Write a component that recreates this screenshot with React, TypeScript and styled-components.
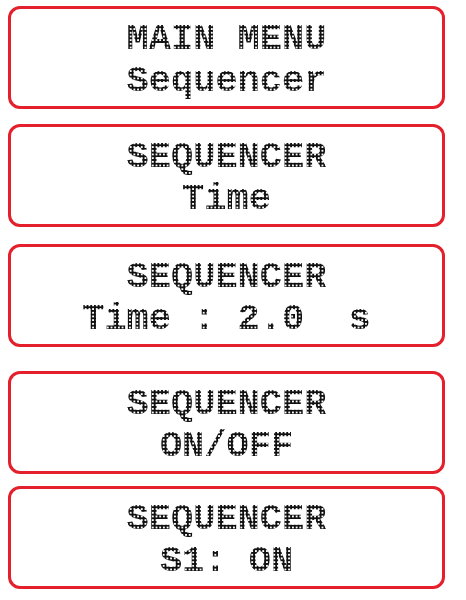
import styled, { createGlobalStyle } from 'styled-components';

const GlobalStyle = createGlobalStyle`
  body {
    margin: 0;
    background: #ffffff;
  }
`;

const Page = styled.div`
  display: flex;
  flex-direction: column;
  width: 437px;
  padding: 6px 0 0 8px;
`;

const Screen = styled.div<{ $gap: number }>`
  box-sizing: border-box;
  height: 103px;
  margin-top: ${(p) => p.$gap}px;
  padding-top: 9px;
  border: 3px solid #e3202b;
  border-radius: 12px;

  display: flex;
  flex-direction: column;
  align-items: center;
`;

const Line = styled.span`
  display: inline-block;
  font-family: 'Liberation Mono', 'DejaVu Sans Mono', monospace;
  font-weight: bold;
  font-size: 37px;
  line-height: 42px;
  white-space: pre;
  color: #111111;

  /* dot matrix look */
  -webkit-mask-image: radial-gradient(circle, #000 1.5px, transparent 1.9px);
  mask-image: radial-gradient(circle, #000 1.5px, transparent 1.9px);
  -webkit-mask-size: 3.7px 3.7px;
  mask-size: 3.7px 3.7px;
`;

const screens = [
  { gap: 0, top: 'MAIN MENU', bottom: 'Sequencer' },
  { gap: 15, top: 'SEQUENCER', bottom: 'Time' },
  { gap: 17, top: 'SEQUENCER', bottom: 'Time : 2.0  s' },
  { gap: 24, top: 'SEQUENCER', bottom: 'ON/OFF' },
  { gap: 12, top: 'SEQUENCER', bottom: 'S1: ON' },
];

function App() {
  return (
    <>
      <GlobalStyle />
      <Page>
        {screens.map((s, i) => (
          <Screen key={i} $gap={s.gap}>
            <Line>{s.top}</Line>
            <Line>{s.bottom}</Line>
          </Screen>
        ))}
      </Page>
    </>
  );
}

export default App;
